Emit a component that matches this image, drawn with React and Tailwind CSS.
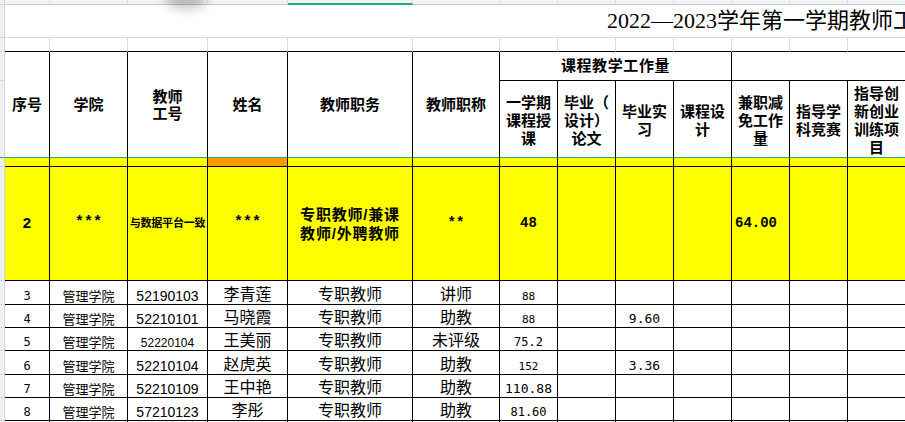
import React from "react";

const SANS = "font-['Liberation_Sans','Noto_Sans_CJK_SC',sans-serif]";
const MONO = "font-['Liberation_Mono','Noto_Sans_CJK_SC',monospace]";
const DMONO = "font-['DejaVu_Sans_Mono','Noto_Sans_CJK_SC',monospace]";

function Gut({ cls = "" }) {
  return <div className={"bg-[#eef0f3] border-r border-b border-[#d3d6dc] " + cls} />;
}

const headTop = [
  { t: "序号" },
  { t: "学院" },
  { t: "教师\n工号" },
  { t: "姓名" },
  { t: "教师职务" },
  { t: "教师职称" },
];

const headSub = [
  "一学期\n课程授\n课",
  "毕业（\n设计）\n论文",
  "毕业实\n习",
  "课程设\n计",
  "兼职减\n免工作\n量",
  "指导学\n科竞赛",
  "指导创\n新创业\n训练项\n目",
];

const rows = [
  { n: "3", id: "52190103", idc: "text-[14px]", name: "李青莲", t: "讲师", g: "88", gc: "text-[11px]", i: "" },
  { n: "4", id: "52210101", idc: "text-[14px]", name: "马晓霞", t: "助教", g: "88", gc: "text-[11px]", i: "9.60" },
  { n: "5", id: "52220104", idc: "text-[12px]", name: "王美丽", t: "未评级", g: "75.2", gc: "text-[12px]", i: "" },
  { n: "6", id: "52210104", idc: "text-[14px]", name: "赵虎英", t: "助教", g: "152", gc: "text-[11px]", i: "3.36" },
  { n: "7", id: "52210109", idc: "text-[14px]", name: "王中艳", t: "助教", g: "110.88", gc: "text-[13px]", i: "" },
  { n: "8", id: "57210123", idc: "text-[14px]", name: "李彤", t: "助教", g: "81.60", gc: "text-[12px]", i: "" },
  { n: "", id: "", idc: "", name: "", t: "", g: "", gc: "", i: "" },
];

const cell = "flex items-end justify-center border-r border-b border-black bg-white leading-none overflow-hidden whitespace-nowrap pb-[1px]";
const ycell = "flex items-center justify-center border-r border-b border-black bg-[#ffff00] overflow-hidden whitespace-nowrap font-bold text-black";

export default function App() {
  const idx13 = Array.from({ length: 13 }, (_, i) => i);
  return (
    <div className={"relative w-[905px] h-[422px] overflow-hidden bg-white text-black " + SANS}>
      <div className="grid grid-cols-[5px_45px_78px_80px_80px_125px_87px_58px_58px_58px_58px_58px_58px_58px] grid-rows-[5px_33px_14px_29px_77px_9px_114px_24px_23px_23px_24px_23px_23px_23px]">
        {/* row 1: column header strip */}
        <Gut />
        {idx13.map((i) => (
          <div
            key={"top" + i}
            className={
              i === 4
                ? "bg-[#f1f2f5] border-r border-[#d8dbe0] border-b-2 border-b-[#22ad78]"
                : "bg-[#f1f2f5] border-r border-b border-[#d8dbe0] border-b-[#c6cad1]"
            }
          />
        ))}

        {/* row 2: title */}
        <Gut />
        <div className="col-span-13 border-b border-[#dadce0] flex items-center pl-[602px] whitespace-nowrap overflow-hidden">
          <span className="font-['Liberation_Serif','Noto_Sans_CJK_SC',serif] text-[22px] leading-none">
            2022—2023学年第一学期教师工
          </span>
        </div>

        {/* row 3: blank */}
        <Gut />
        {idx13.map((i) => (
          <div key={"blank" + i} className="border-r border-r-[#dadce0] border-b border-b-black" />
        ))}

        {/* row 4: header */}
        <Gut />
        {headTop.map((h, i) => (
          <div
            key={"ht" + i}
            className="row-span-2 flex items-center justify-center text-center border-r border-black border-b border-b-[#22ad78] font-bold text-[15px] leading-[17px] whitespace-pre-line"
          >
            {h.t}
          </div>
        ))}
        <div className="col-span-4 flex items-center justify-center border-r border-b border-black font-bold text-[15px] tracking-[0.6px] pt-[1px]">
          课程教学工作量
        </div>
        <div className="col-span-3 border-b border-black" />

        {/* row 5 */}
        <Gut cls="border-b-[#22ad78]" />
        {headSub.map((t, i) => (
          <div
            key={"hs" + i}
            className="flex items-center justify-center text-center border-r border-black border-b border-b-[#22ad78] font-bold text-[15px] leading-[18px] whitespace-pre-line pt-[3px]"
          >
            {t}
          </div>
        ))}

        {/* row 6: thin yellow */}
        <Gut />
        {idx13.map((i) => (
          <div
            key={"thin" + i}
            className={
              i === 3
                ? "bg-[#ff9900] border-r border-b border-black"
                : "bg-[#ffff00] border-r border-b border-black"
            }
          />
        ))}

        {/* row 7: yellow sample row */}
        <Gut />
        <div className={ycell + " text-[15px]"}>2</div>
        <div className={ycell + " text-[15px] " + MONO}>***</div>
        <div className={ycell + " text-[11px] tracking-[-0.2px]"}>与数据平台一致</div>
        <div className={ycell + " text-[15px] " + MONO}>***</div>
        <div className={ycell + " text-[15px] leading-[19px] whitespace-pre-line text-center tracking-[0.8px]"}>
          {"专职教师/兼课\n教师/外聘教师"}
        </div>
        <div className={ycell + " text-[14px] " + MONO}>**</div>
        <div className={ycell + " text-[14px] " + MONO}>48</div>
        <div className={ycell} />
        <div className={ycell} />
        <div className={ycell} />
        <div className={ycell + " !justify-start pl-[3px] text-[14px] " + MONO}>64.00</div>
        <div className={ycell} />
        <div className={ycell} />

        {/* data rows */}
        {rows.map((r, k) => (
          <React.Fragment key={"r" + k}>
            <Gut />
            <div className={cell + " text-[12px] pb-[2px] " + DMONO}>{r.n}</div>
            <div className={cell + " text-[13px]"}>{r.n ? "管理学院" : ""}</div>
            <div className={cell + " " + r.idc}>{r.id}</div>
            <div className={cell + " text-[16px]"}>{r.name}</div>
            <div className={cell + " text-[16px]"}>{r.n ? "专职教师" : ""}</div>
            <div className={cell + " text-[16px]"}>{r.t}</div>
            <div className={cell + " pb-[2px] " + r.gc + " " + DMONO}>{r.g}</div>
            <div className={cell} />
            <div className={cell + " text-[13px] pb-[2px] " + DMONO}>{r.i}</div>
            <div className={cell} />
            <div className={cell} />
            <div className={cell} />
            <div className={cell} />
          </React.Fragment>
        ))}
      </div>
      <div className="absolute left-[166px] top-[-16px] w-[40px] h-[24px] rounded-full bg-black/25 blur-[6px]" />
    </div>
  );
}
